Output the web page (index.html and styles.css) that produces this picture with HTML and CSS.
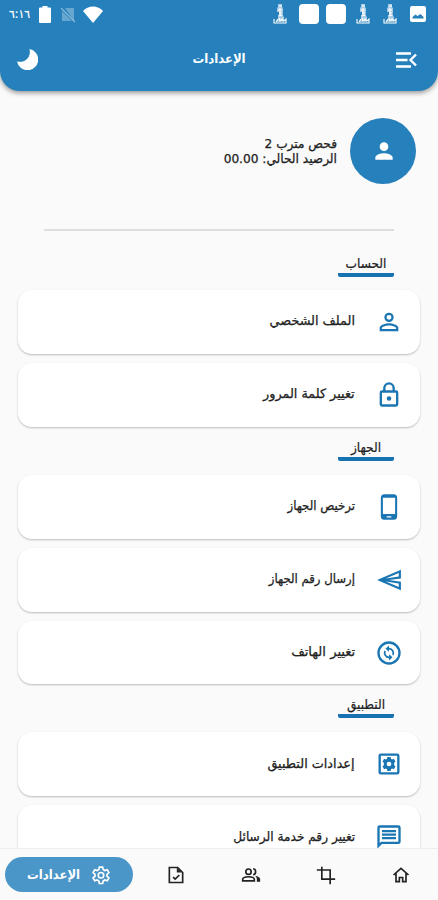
FILE: index.html
```
<!DOCTYPE html>
<html lang="ar" dir="rtl">
<head>
<meta charset="utf-8">
<meta name="viewport" content="width=device-width">
<title>الإعدادات</title>
<link rel="stylesheet" href="styles.css">
</head>
<body>
<svg class="defs" aria-hidden="true">
  <symbol id="flask" viewBox="0 0 14 20"><path d="M5 0h4v3l1 1v5l-1 2 2 2v3H5v-3l1-2V8H4V4l1-1z" opacity=".6"/><path d="M6 2h3M5 6h4M6 9h3M5 12l5-1M7 4v7M1 15v4h12v-4l-2 2-2-2-2 2-1-3M3 18l2-3M3 17h8" fill="none" stroke="#fff" stroke-width="1.1"/></symbol>
</svg>
<div class="screen">
  <header class="header">
    <div class="status">
      <div class="status-group">
        <svg class="picture" viewBox="0 0 16 16"><rect width="16" height="16" rx="2"/><path class="cut" d="M2.500 12.500V11l3-2.500 2 1.500L10.500 8l3 3v1.500z"/></svg>
        <svg class="flask"><use href="#flask"/></svg>
        <svg class="flask"><use href="#flask"/></svg>
        <i class="block"></i>
        <i class="block"></i>
        <svg class="flask last"><use href="#flask"/></svg>
      </div>
      <div class="status-group end">
        <svg class="wifi" viewBox="0 0 20 17"><path d="M10 17 0 5C5-1 15-1 20 5z"/></svg>
        <svg class="sim" viewBox="0 0 16 17"><path d="M5 2h9v13zM2 5v10h10z" opacity=".3"/><path d="m1 2 14 14" stroke="#fff" stroke-opacity=".45" stroke-width="1.2"/></svg>
        <svg class="battery" viewBox="0 0 12 17"><path d="M3.500 0h5v1.500H11a1 1 0 0 1 1 1V16a1 1 0 0 1-1 1H1a1 1 0 0 1-1-1V2.500a1 1 0 0 1 1-1h2.500z"/></svg>
        <span class="time" dir="ltr">٦:١٦</span>
      </div>
    </div>
    <div class="toolbar">
      <svg class="menu" viewBox="0 0 21 16"><path d="M0 1.500h15M0 8h11.500M0 14.500h15M20 2.500 14.500 8l5.500 5.500"/></svg>
      <h1>الإعدادات</h1>
      <svg class="moon" viewBox="0 0 21 21"><path d="M12.500 0A10.700 10.700 0 1 1 0 12.500 C8 14.500 14.500 8 12.500 0z"/></svg>
    </div>
  </header>
  <main class="content">
    <section class="profile">
      <div class="avatar"><svg viewBox="0 0 24 24"><path d="M12 12a4 4 0 1 0 0-8 4 4 0 0 0 0 8zm0 2c-2.670 0-8 1.340-8 4v2h16v-2c0-2.660-5.330-4-8-4z"/></svg></div>
      <div class="who"><p>فحص مترب 2</p><p>الرصيد الحالي: 00.00</p></div>
    </section>
    <hr>
    <h2 class="first"><span>الحساب</span></h2>
    <div class="card"><svg viewBox="0 0 24 24"><path d="M12 5.900a2.100 2.100 0 1 1 0 4.200 2.100 2.100 0 0 1 0-4.200m0 9c2.970 0 6.100 1.460 6.100 2.100v1.100H5.900V17c0-.64 3.130-2.100 6.100-2.100M12 4a4 4 0 1 0 0 8 4 4 0 0 0 0-8zm0 9c-2.670 0-8 1.340-8 4v3h16v-3c0-2.660-5.330-4-8-4z"/></svg><span class="wide">الملف الشخصي</span></div>
    <div class="card"><svg viewBox="0 0 24 24"><path d="M18 8h-1V6A5 5 0 0 0 7 6v2H6a2 2 0 0 0-2 2v10c0 1.100.9 2 2 2h12a2 2 0 0 0 2-2V10a2 2 0 0 0-2-2zM9 6a3 3 0 0 1 6 0v2H9zm9 14H6V10h12zm-6-3a2 2 0 1 0 0-4 2 2 0 0 0 0 4z"/></svg><span class="wide">تغيير كلمة المرور</span></div>
    <h2><span>الجهاز</span></h2>
    <div class="card"><svg viewBox="0 0 24 24"><path d="M16 1H8a3 3 0 0 0-3 3v16a3 3 0 0 0 3 3h8a3 3 0 0 0 3-3V4a3 3 0 0 0-3-3zm-2 20h-4v-1h4zm3.250-3H6.750V4h10.500z"/></svg><span>ترخيص الجهاز</span></div>
    <div class="card"><svg class="send" viewBox="0 0 24 24"><path fill-rule="evenodd" d="M23 2.500 1 12l22 9.500v-8L12 12l11-1.500zM21 5.500v3.300L9 10.700zM21 18.500v-3.300L9 13.300z"/></svg><span>إرسال رقم الجهاز</span></div>
    <div class="card"><svg viewBox="0 0 24 24"><circle class="line" cx="12" cy="12" r="9"/><path d="M12 7.500V5.500L9 8.300l3 2.700V9a3 3 0 0 1 2.700 4.300l1.100 1.100A4.500 4.500 0 0 0 12 7.500zM12 15a3 3 0 0 1-2.700-4.300L8.200 9.600A4.500 4.500 0 0 0 12 16.500v2l3-2.800-3-2.700z"/></svg><span class="wider">تغيير الهاتف</span></div>
    <h2><span>التطبيق</span></h2>
    <div class="card"><svg viewBox="0 0 24 24"><rect class="line" x="4" y="4" width="16" height="16" rx="1"/><path fill-rule="evenodd" d="m10.600 6-.3 1.500-1 .6-1.500-.5-1.400 2.400L7.600 11v2l-1.200 1 1.400 2.400 1.500-.5 1 .6.3 1.500h2.800l.3-1.500 1-.6 1.500.5 1.400-2.400-1.200-1v-2l1.200-1-1.400-2.400-1.500.5-1-.6-.3-1.500zM12 10a2 2 0 1 1 0 4 2 2 0 0 1 0-4z"/></svg><span class="wide">إعدادات التطبيق</span></div>
    <div class="card"><svg viewBox="0 0 24 24"><path d="M20 2H4a2 2 0 0 0-2 2v18l4-4h14a2 2 0 0 0 2-2V4a2 2 0 0 0-2-2zm0 14H5.200L4 17.200V4h16zM6 12h12v2H6zm0-3h12v2H6zm0-3h12v2H6z"/></svg><span class="semi">تغيير رقم خدمة الرسائل</span></div>
  </main>
  <nav class="nav">
    <a><svg viewBox="0 0 24 24"><path d="m3 12 9-8 9 8M6 10v10h4v-5h4v5h4V10"/></svg></a>
    <a><svg viewBox="0 0 24 24"><path d="M1 6h16v12M7 2v15h16M17 17v6"/></svg></a>
    <a><svg viewBox="0 0 24 24"><circle cx="9" cy="8" r="3.200"/><path d="M2 19v-1.500c0-4.500 14-4.500 14 0V19zM14.500 4.500c4 0 4 7 0 7"/><path class="fill" d="M17 13c3 .5 6 2 6 4v3h-4v-3c0-1.500-.8-3-2-4z"/></svg></a>
    <a><svg viewBox="0 0 24 24"><path d="M4 3h10l6 6v12H4zM8.500 14.500l2.500 2.500 5-5"/><path class="fill" d="M13 3v6h6z"/></svg></a>
    <a class="active"><svg viewBox="0 0 24 24"><path d="M10 2.500h4l.6 3 2 1.200 2.900-1 2 3.500-2.300 2v2.300l2.300 2-2 3.500-2.900-1-2 1.200-.6 3h-4l-.6-3-2-1.200-2.900 1-2-3.500 2.300-2v-2.300l-2.300-2 2-3.500 2.900 1 2-1.200z"/><circle cx="12" cy="12.300" r="3.300"/></svg><span>الإعدادات</span></a>
  </nav>
</div>
</body>
</html>
```
FILE: styles.css
```
* { box-sizing: border-box; }
body { margin: 0; background: #fafafa; color: #222; font-family: "DejaVu Sans Condensed", "DejaVu Sans", sans-serif; font-stretch: condensed; }
svg { display: block; flex: none; fill: currentColor; }
.defs { position: absolute; width: 0; height: 0; }
.screen { height: 900px; display: flex; flex-direction: column; overflow: hidden; }
.header { flex: none; height: 91px; background: #2680bb; color: #fff; border-radius: 0 0 20px 20px; box-shadow: 0 2px 5px rgba(0,0,0,.4); }
.status { height: 28px; display: flex; justify-content: space-between; padding: 0 12px 0 9px; }
.status-group { display: flex; align-items: center; }
.picture { width: 16px; height: 16px; margin-left: 13px; }
.picture .cut { fill: #2680bb; }
.flask { width: 14px; height: 20px; margin-left: 13px; }
.flask + .block { margin-right: -3px; }
.block { width: 20px; height: 20px; border-radius: 4px; background: #fff; margin-left: 7px; }
.flask.last { margin-right: 4px; margin-left: 0; }
.wifi { width: 20px; height: 17px; margin-left: 7px; }
.sim { width: 16px; height: 17px; margin-left: 9px; }
.battery { width: 12px; height: 17px; margin-left: 8px; }
.time { font-size: 12px; width: 22px; white-space: nowrap; -webkit-text-stroke: .2px; }
.status-group .block + .flask { margin-right: 5px; }
.toolbar { height: 62px; display: grid; grid-template-columns: 21px 1fr 21px; align-items: center; padding: 0 21px 0 17px; }
.menu { width: 21px; height: 16px; fill: none; stroke: #fff; stroke-width: 2.400; margin-top: 2px; }
.moon { width: 21px; height: 21px; }
h1 { margin: 0 0 2px; padding-left: 4px; font-size: 13px; text-align: center; }
.content { flex: 1; min-height: 0; overflow: hidden; padding: 27px 18px 0; }
.profile { display: flex; align-items: center; height: 66px; padding-right: 4px; gap: 13px; }
.avatar { width: 66px; height: 66px; border-radius: 50%; background: #2680bb; color: #fff; display: grid; place-items: center; }
.avatar svg { width: 26px; height: 26px; margin-right: -1px; }
.who p { margin: 0; font-size: 13px; line-height: 15.500px; white-space: nowrap; transform: scaleX(1.040); transform-origin: right; -webkit-text-stroke: .25px; }
hr { margin: 45px 26px 0; border: 0; height: 2px; background: #dedede; }
h2 { margin: 11px 26px 14px auto; width: 56px; height: 23px; border-bottom: 4px solid #1672b0; border-radius: 2px; font-size: 13.500px; font-weight: 400; line-height: 18px; text-align: center; white-space: nowrap; -webkit-text-stroke: .2px; }
h2.first { margin-top: 23px; margin-bottom: 13px; }
.card { height: 63.900px; margin-bottom: 9px; background: #fff; border-radius: 14px; box-shadow: 0 1px 2px rgba(0,0,0,.25); display: flex; align-items: center; padding-right: 17px; gap: 20px; font-size: 13px; }
.card span { transform-origin: right; margin-top: -2px; -webkit-text-stroke: .25px; }
.card .semi { transform: scaleX(1.040); }
.card .wide { transform: scaleX(1.095); }
.card .wider { transform: scaleX(1.120); }
.card svg { width: 28px; height: 28px; color: #1a75b3; }
.card .send { padding: 1px; }
.card .line { fill: none; stroke: currentColor; stroke-width: 2; }
.nav { flex: none; height: 52px; background: #fafafa; border-top: 1px solid #eee; display: flex; align-items: center; padding: 0 0 0 5px; }
.nav a { width: 75px; display: grid; place-items: center; color: #222; }
.nav svg { width: 20px; height: 20px; fill: none; stroke: currentColor; stroke-width: 2; }
.nav svg .fill { fill: currentColor; stroke: none; }
.nav .active { width: 128px; height: 35px; margin-right: auto; border-radius: 18px; background: #4b96c8; color: #fff; display: flex; align-items: center; justify-content: center; gap: 11px; font-size: 13px; font-weight: 700; }
```
